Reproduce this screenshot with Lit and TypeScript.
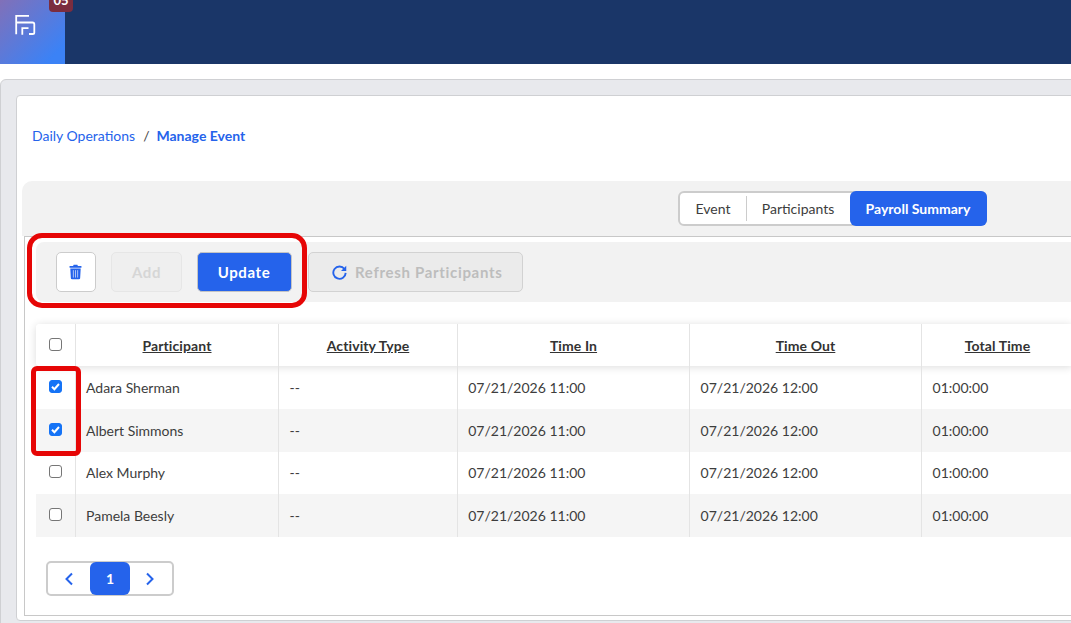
import { LitElement, html, css } from "lit";
import { customElement } from "lit/decorators.js";

const rows = [
  { name: "Adara Sherman", checked: true },
  { name: "Albert Simmons", checked: true },
  { name: "Alex Murphy", checked: false },
  { name: "Pamela Beesly", checked: false },
];

@customElement("app-root")
export class AppRoot extends LitElement {
  static styles = css`
    :host { display: block; width: 1071px; height: 623px; overflow: hidden; position: relative; background: #fff; font-family: Lato, "Liberation Sans", sans-serif; color: #3d3d3d; font-size: 14px; }
    * { box-sizing: border-box; }
    .topbar { height: 64px; background: #1a3668; display: flex; }
    .logo { width: 65px; height: 64px; position: relative; overflow: hidden; background: linear-gradient(135deg, #8170b8 0%, #3b82f6 85%); }
    .logo svg { position: absolute; left: 14px; top: 14px; }
    .badgewrap { position: absolute; left: 49px; top: 0; width: 24px; height: 12px; overflow: hidden; z-index: 1; }
    .badge { margin-top: -12px; width: 24px; height: 24px; background: #7b2d3f; border-radius: 4px; color: #fff; font-size: 13px; font-weight: 700; display: flex; align-items: center; justify-content: center; }
    .outer { margin-top: 15px; width: 1200px; height: 620px; background: #e8e9ed; border: 1px solid #cfd0d3; border-radius: 6px; padding: 15px 0 0 15px; }
    .card { background: #fff; border: 1px solid #cfd0d3; border-radius: 4px; height: 526px; padding: 0 0 0 5px; width: 1180px; }
    .crumbs { height: 85px; padding: 0 0 7px 10px; display: flex; align-items: center; font-size: 14px; color: #2563eb; }
    .crumbs .sep { margin: 0 7px 0 8px; color: #444; }
    .crumbs b { font-weight: 700; }
    .tabbar { height: 55px; background: #f2f2f2; border-radius: 10px 0 0 0; padding: 10px 0 0 656px; }
    .seg { display: inline-flex; height: 35px; width: 309px; border: 2px solid #ccc; border-radius: 6px; background: #fff; font-size: 14px; align-items: stretch; }
    .seg span { display: flex; align-items: center; justify-content: center; padding-bottom: 1px; }
    .seg .ev { width: 67px; position: relative; padding-right: 1px; }
    .seg .ev::after { content: ""; position: absolute; right: 0; top: 3px; bottom: 3px; width: 1px; background: #ccc; }
    .seg .pa { width: 103px; padding-right: 1px; }
    .seg .pay { flex: 1; margin: -2px -2px -2px 0; background: #2563eb; color: #fff; border-radius: 6px; font-weight: 700; padding-right: 1px; }
    .box { margin-left: 2px; height: 380px; border: 1px solid #c8c8c8; border-right: 0; padding: 5px 0 0 11px; }
    .toolbar { height: 60px; background: #f2f2f2; border-radius: 8px 0 0 8px; padding: 10px 0 0 20px; display: flex; align-items: flex-start; }
    .btn { height: 40px; border-radius: 5px; border: 1px solid #d4d4d4; display: flex; align-items: center; justify-content: center; font-size: 15px; font-weight: 700; letter-spacing: 0.6px; }
    .trash { width: 40px; background: #fff; border-color: #ccc; }
    .add { width: 71px; margin-left: 15px; background: #efefef; border-color: #e6e6e6; color: #d6d6d6; }
    .update { width: 95px; margin-left: 15px; background: #2563eb; border-color: #c4c4c4; color: #fff; padding-right: 1px; }
    .refresh { width: 215px; margin-left: 16px; background: #ebebeb; border-color: #d2d2d2; color: #bdbdbd; gap: 8px; justify-content: flex-start; padding-left: 23px; letter-spacing: 0.68px; }
    table { margin-top: 22px; border-collapse: separate; border-spacing: 0; table-layout: fixed; width: 1037px; font-size: 14px; }
    th { height: 42px; background: #fff; font-weight: 700; text-decoration: underline; color: #333; text-align: center; border-left: 1px solid #e4e4e4; padding: 0; letter-spacing: 0.1px; }
    thead { box-shadow: 0 1px 8px rgba(0,0,0,0.14); border-radius: 4px; }
    th:first-child { border-left: 0; border-radius: 4px 0 0 4px; }
    td { height: 42.75px; border-left: 1px solid #e4e4e4; padding: 0 0 0 10.6px; white-space: nowrap; }
    td:first-child { border-left: 0; padding: 0; }
    td:nth-child(2) { padding-left: 10px; }
    td:nth-child(4) { padding-left: 10.2px; }
    tbody tr:nth-child(even) td { background: #f5f5f5; }
    .cb { display: block; width: 13px; height: 13px; margin: -2px 0 0 13px; border: 1px solid #767676; border-radius: 3px; background: #fff; }
    .cb.on { background: #1573f6; border-color: #1573f6; }
    .cb svg { display: block; margin: -1px; }
    .pager { margin: 24px 0 0 10px; width: 128px; height: 35px; border: 2px solid #ccc; border-radius: 5px; display: flex; align-items: center; background: #fff; }
    .pager span { display: flex; align-items: center; justify-content: center; }
    .pager .arrow { width: 42px; }
    .pager .arrow.next { width: 40px; }
    .pager .cur { width: 40px; height: 33px; background: #2563eb; color: #fff; border-radius: 6px; font-weight: 700; font-size: 14px; }
    .mark { position: absolute; border: 5px solid #e60606; pointer-events: none; }
    .m1 { left: 27px; top: 233px; width: 280px; height: 75px; border-radius: 15px; }
    .m2 { left: 31px; top: 366px; width: 50px; height: 90px; border-radius: 6px; }
  `;

  private check(on: boolean) {
    return html`<span class="cb ${on ? "on" : ""}">${on
      ? html`<svg width="13" height="13" viewBox="0 0 13 13"><path d="M3 6.8 5.4 9.2 10 4" fill="none" stroke="#fff" stroke-width="2"/></svg>`
      : ""}</span>`;
  }

  render() {
    return html`
      <div class="topbar">
        <div class="logo">
          <svg width="22" height="22" viewBox="0 0 22 22" fill="none" stroke="#fff" stroke-width="1.800">
            <path d="M2.200 20.300V1.900H15"/>
            <path d="M2.200 8.500H18.500Q20.300 8.500 20.300 10.300V18.400Q20.300 20 18.700 20H15"/>
            <path d="M8.300 20.800V14.200H14.500"/>
          </svg>
        </div>
      </div>
      <div class="badgewrap"><div class="badge">05</div></div>
      <div class="outer">
        <div class="card">
          <div class="crumbs">Daily Operations<span class="sep">/</span><b>Manage Event</b></div>
          <div class="tabbar">
            <div class="seg">
              <span class="ev">Event</span><span class="pa">Participants</span><span class="pay">Payroll Summary</span>
            </div>
          </div>
          <div class="box">
            <div class="toolbar">
              <div class="btn trash">
                <svg width="13" height="16" viewBox="0 0 14 16" style="margin-left:-1px">
                  <path fill="#2563eb" d="M5 0.3h4l.6 1.2H13.400v1.800H.6V1.500H4.400zM1.400 4.200h11.200l-.6 10.400q-.1 1.200-1.300 1.200H3.300q-1.200 0-1.300-1.200z"/>
                  <path stroke="#b9ccf7" stroke-width="1" d="M4.700 6v8M7 6v8M9.300 6v8"/>
                </svg>
              </div>
              <div class="btn add">Add</div>
              <div class="btn update">Update</div>
              <div class="btn refresh">
                <svg width="15" height="15" viewBox="0 0 16 16">
                  <path fill="none" stroke="#2563eb" stroke-width="2" d="M13.300 4.200A6.600 6.600 0 1 0 14.600 8.400"/>
                  <path fill="#2563eb" d="M15.200 .8V6.400H9.600z"/>
                </svg>
                Refresh Participants
              </div>
            </div>
            <table>
              <colgroup>
                <col style="width:39px"/><col style="width:203px"/><col style="width:179px"/><col style="width:232px"/><col style="width:232px"/><col/>
              </colgroup>
              <thead>
                <tr>
                  <th>${this.check(false)}</th>
                  <th>Participant</th><th>Activity Type</th><th>Time In</th><th>Time Out</th><th>Total Time</th>
                </tr>
              </thead>
              <tbody>
                ${rows.map((r) => html`
                  <tr>
                    <td>${this.check(r.checked)}</td>
                    <td>${r.name}</td>
                    <td>--</td>
                    <td>07/21/2026 11:00</td>
                    <td>07/21/2026 12:00</td>
                    <td>01:00:00</td>
                  </tr>`)}
              </tbody>
            </table>
            <div class="pager">
              <span class="arrow"><svg width="10" height="14" viewBox="0 0 10 14"><path d="M8 1.500 2.500 7 8 12.500" fill="none" stroke="#2563eb" stroke-width="2"/></svg></span>
              <span class="cur">1</span>
              <span class="arrow next"><svg width="10" height="14" viewBox="0 0 10 14"><path d="M2 1.500 7.500 7 2 12.500" fill="none" stroke="#2563eb" stroke-width="2"/></svg></span>
            </div>
          </div>
        </div>
      </div>
      <div class="mark m1"></div>
      <div class="mark m2"></div>
    `;
  }
}
